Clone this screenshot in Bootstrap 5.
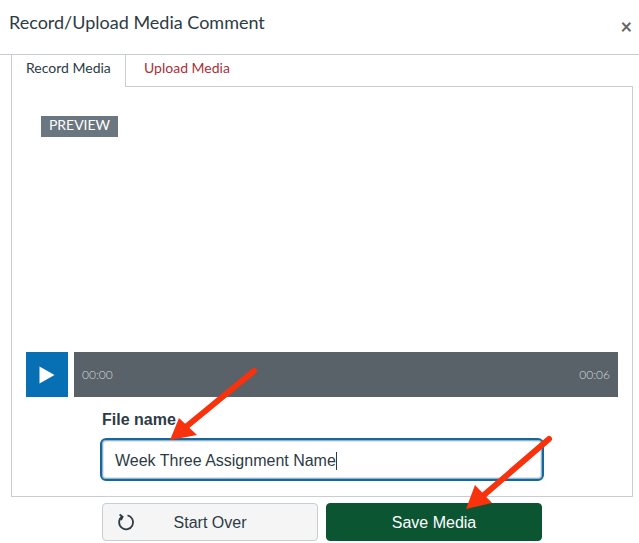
<!DOCTYPE html>
<html lang="en">
<head>
    <meta charset="UTF-8">
    <meta name="viewport" content="width=device-width, initial-scale=1.0">
    <title>Record/Upload Media Comment</title>
    <link href="https://cdn.jsdelivr.net/npm/bootstrap@5.3.0/dist/css/bootstrap.min.css" rel="stylesheet">
    <style>
        html, body { height: 100%; overflow: hidden; }
        body { position: relative; background: #fff; color: #2d3b45; font-family: "Lato", sans-serif; }
        .dlg-head { height: 55px; border-bottom: 1px solid #c7cdd1; padding: 11px 0 0 9px; }
        .dlg-title { font-family: "Lato", sans-serif; font-size: 18px; font-weight: 400; line-height: 22px; margin: 0; color: #2d3b45; }
        .dlg-close { font-size: 20px; line-height: 20px; color: #666; margin: 5px 7px 0 0; font-weight: 700; }
        .media-tabs { margin: 0 6px 0 11px; height: 32px; border-bottom: 1px solid #c7cdd1; flex-wrap: nowrap; }
        .media-tabs .nav-link { font-size: 14px; line-height: 17px; padding: 4px 14px 10px; height: 32px; border: 0; border-radius: 0; color: #ad2f3a; background: transparent; }
        .media-tabs .nav-link.active { width: 115px; color: #2d3b45; background: #fff; border-left: 1px solid #c7cdd1; border-right: 1px solid #c7cdd1; height: 32px; padding-left: 14px; }
        .media-tabs .nav-item + .nav-item .nav-link { padding-left: 18px; }
        .media-panel { margin: 0 6px 0 11px; height: 410px; border: 1px solid #c7cdd1; border-top: 0; padding: 29px 14px 0 14px; }
        .preview-tag { width: 77px; height: 21px; margin-left: 15px; background: #6b7780; color: #fff; font-size: 14px; line-height: 17px; text-align: center; }
        .player { height: 45px; margin-top: 215px; gap: 6px; }
        .play-btn { width: 42px; background: #0770b5; border: 0; border-radius: 0; padding: 0; }
        .player-track { background: #596269; color: #d5d9dc; font-family: "Lato", sans-serif; font-size: 12px; font-weight: 300; padding: 1px 8px 0; }
        .name-field { margin: 13px 0 0 74px; width: 444px; }
        .name-label { font-family: "Liberation Sans", sans-serif; font-weight: 700; font-size: 16px; line-height: 20px; margin: 0 0 8px 2px; color: #2d3b45; }
        .name-input { height: 43px; border: 2px solid #14689e; border-radius: 6px; padding: 2px 13px 0; font-family: "Liberation Sans", sans-serif; font-size: 16px; color: #2d3b45; box-shadow: inset 0 0 0 1px #8fb4cd, inset 0 0 0 2px #e1e5e8; }
        .caret-bar { display: inline-block; width: 1px; height: 18px; background: #2d3b45; vertical-align: -3px; }
        .foot-actions { margin: 6px 0 0 102px; gap: 8px; }
        .foot-btn { width: 216px; height: 38px; font-family: "Liberation Sans", sans-serif; font-size: 16px; border-radius: 4px; padding: 1px 0 0; }
        .btn-over { background: #f5f5f5; border: 1px solid #c7cdd1; color: #2d3b45; padding-left: 0; }
        .btn-over svg { left: 14px; top: 9px; }
        .btn-save { background: #0b5532; border: 1px solid #0b5532; color: #fff; }
        .arrows { position: absolute; left: 0; top: 0; pointer-events: none; }
    </style>
</head>
<body>
    <div class="dlg-head d-flex justify-content-between align-items-start">
        <h1 class="dlg-title">Record/Upload Media Comment</h1>
        <span class="dlg-close">&times;</span>
    </div>

    <!-- Tabs -->
    <ul class="nav media-tabs">
        <li class="nav-item"><a class="nav-link active" href="#">Record Media</a></li>
        <li class="nav-item"><a class="nav-link" href="#">Upload Media</a></li>
    </ul>

    <div class="media-panel">
        <div class="preview-tag">PREVIEW</div>

        <!-- Player -->
        <div class="player d-flex">
            <button class="play-btn d-flex align-items-center justify-content-center" type="button">
                <svg width="16" height="18" viewBox="0 0 16 18"><path d="M0.5 0.5 L15.5 9 L0.5 17.5 Z" fill="#fff"/></svg>
            </button>
            <div class="player-track flex-grow-1 d-flex align-items-center justify-content-between">
                <span>00:00</span><span>00:06</span>
            </div>
        </div>

        <div class="name-field">
            <div class="name-label">File name</div>
            <div class="name-input d-flex align-items-center">Week Three Assignment Name<span class="caret-bar"></span></div>
        </div>
    </div>

    <div class="foot-actions d-flex">
        <button class="btn foot-btn btn-over position-relative" type="button">
            <svg class="position-absolute" width="18" height="18" viewBox="0 0 18 18" fill="none" stroke="#2d3b45" stroke-width="1.8"><path d="M5 3.6 A7 7 0 1 0 10.5 2.4"/><path d="M2.6 1.6 L5.6 3.8 L4 7" /></svg>
            Start Over
        </button>
        <button class="btn foot-btn btn-save" type="button">Save Media</button>
    </div>

    <!-- Annotation arrows -->
    <svg class="arrows" width="639" height="543" viewBox="0 0 639 543">
        <line x1="254" y1="371" x2="187" y2="426" stroke="#f7320c" stroke-width="6" stroke-linecap="round"/>
        <path d="M170 440 L179 418 L197 435 Z" fill="#f7320c"/>
        <line x1="549" y1="439" x2="484" y2="495" stroke="#f7320c" stroke-width="6" stroke-linecap="round"/>
        <path d="M466 509 L475 485 L492 503 Z" fill="#f7320c"/>
    </svg>

    <script src="https://cdn.jsdelivr.net/npm/bootstrap@5.3.0/dist/js/bootstrap.bundle.min.js"></script>
</body>
</html>
